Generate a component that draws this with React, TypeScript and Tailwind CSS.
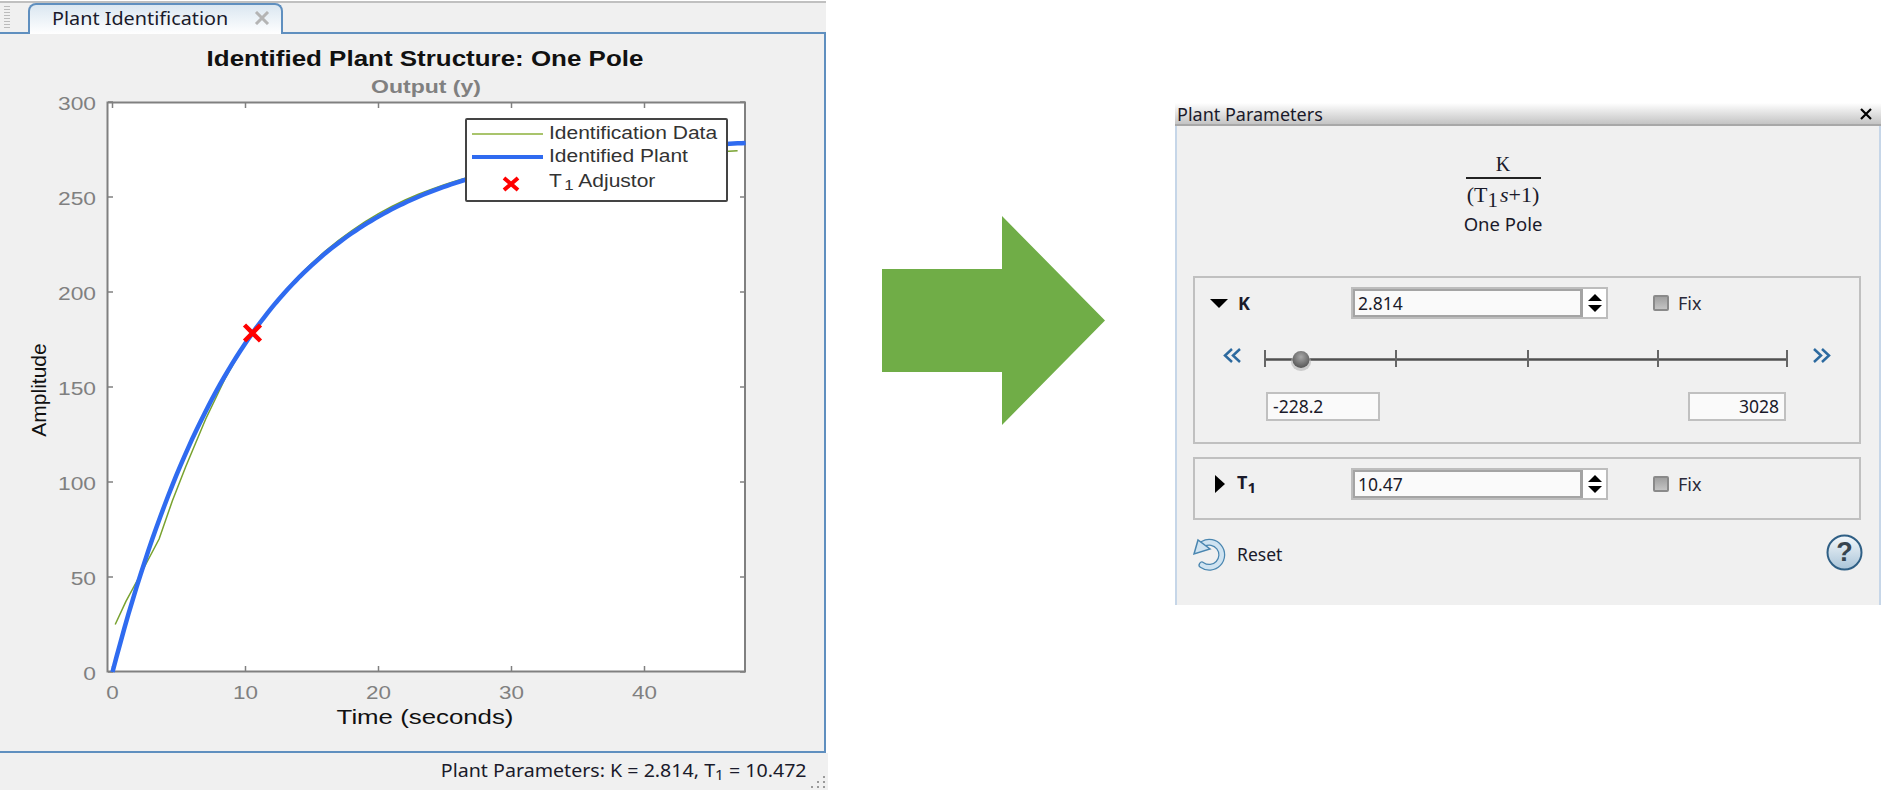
import React from 'react';

const xPx = (t: number) => 112.5 + 13.3 * t;
const yPx = (v: number) => 672 - 1.9 * v;
const plant = (t: number) => 281.4 * (1 - Math.exp(-t / 10.472));

const plantPoints = Array.from({ length: 160 }, (_, i) => {
  const t = (i / 159) * 47.6;
  return `${xPx(t).toFixed(1)},${yPx(plant(t)).toFixed(1)}`;
}).join(' ');

// the measured data leaves the fitted curve only at the start and at the far end
const dataTail = Array.from({ length: 38 }, (_, i): [number, number] => {
  const t = 10 + i;
  return [t, plant(t) + 1.5 * Math.sin(((t - 10) / 20) * Math.PI) - (t > 30 ? (t - 30) * 0.19 : 0)];
});
const dataRaw: [number, number][] = [
  [0.2, 25], [1, 37], [2, 50], [3.5, 70], [4.5, 90], [5.5, 108], [7, 133], [8.5, 155], ...dataTail,
];
const dataPoints = dataRaw.map(([t, v]) => `${xPx(t).toFixed(1)},${yPx(v).toFixed(1)}`).join(' ');

const yTicks = [0, 50, 100, 150, 200, 250, 300];
const xTicks = [0, 10, 20, 30, 40];
const chartFont = 'Liberation Sans, sans-serif';

// viewBox keeps page coordinates, the panel starts at y=34
const IdentificationPlot = () => (
  <svg className="block" width="824" height="717" viewBox="0 34 824 717" fontFamily={chartFont}>
    <text transform="translate(425 66) scale(1.18 1)" textAnchor="middle" fontSize="22" fontWeight="bold" fill="#111">
      Identified Plant Structure: One Pole
    </text>
    <text transform="translate(426 93) scale(1.28 1)" textAnchor="middle" fontSize="18" fontWeight="bold" fill="#808080">
      Output (y)
    </text>
    <rect x="107.5" y="102.5" width="637.5" height="569" fill="#fff" stroke="#808080" strokeWidth="2" />
    {yTicks.map((v) => (
      <g key={v}>
        <line x1="108" x2="113" y1={yPx(v)} y2={yPx(v)} stroke="#808080" strokeWidth="1.5" />
        <line x1="740" x2="745" y1={yPx(v)} y2={yPx(v)} stroke="#808080" strokeWidth="1.5" />
        <text transform={`translate(96 ${yPx(v) + 8}) scale(1.2 1)`} textAnchor="end" fill="#808080" fontSize="19">
          {v}
        </text>
      </g>
    ))}
    {xTicks.map((t) => (
      <g key={t}>
        <line x1={xPx(t)} x2={xPx(t)} y1="671" y2="666" stroke="#808080" strokeWidth="1.5" />
        <line x1={xPx(t)} x2={xPx(t)} y1="103" y2="108" stroke="#808080" strokeWidth="1.5" />
        <text transform={`translate(${xPx(t)} 699) scale(1.18 1)`} textAnchor="middle" fill="#808080" fontSize="19">
          {t}
        </text>
      </g>
    ))}
    <polyline points={dataPoints} fill="none" stroke="#78a22f" strokeWidth="1.500" />
    <polyline points={plantPoints} fill="none" stroke="#2f6bf0" strokeWidth="4.500" />
    <path d="M244.5 325 L260.500 341 M260.500 325 L244.500 341" stroke="#ff0000" strokeWidth="4.500" />
    <text transform="translate(425 724) scale(1.23 1)" textAnchor="middle" fill="#111" fontSize="21">
      Time (seconds)
    </text>
    <text transform="translate(46 390) rotate(-90)" textAnchor="middle" fill="#111" fontSize="21">
      Amplitude
    </text>
  </svg>
);

const Legend = () => (
  <div className="absolute left-[465px] top-[84px] w-[263px] h-[84px] bg-white border-2 border-[#444] rounded-[2px] text-[17.5px] text-[#333] pt-[2px] font-['Liberation_Sans',sans-serif]">
    <div className="flex items-center h-[23px]">
      <div className="ml-[5px] w-[71px] h-[2px] bg-[#a9c46c]" />
      <span className="ml-[6px] whitespace-nowrap inline-block origin-left scale-x-[1.2]">Identification Data</span>
    </div>
    <div className="flex items-center h-[23px]">
      <div className="ml-[5px] w-[71px] h-[4px] bg-[#2f6bf0]" />
      <span className="ml-[6px] whitespace-nowrap inline-block origin-left scale-x-[1.2]">Identified Plant</span>
    </div>
    <div className="flex items-center h-[26px]">
      <div className="w-[82px] flex justify-center pl-[5px] pt-[6px]">
        <svg width="18" height="16" viewBox="0 0 18 16">
          <path d="M2 2 L16 14 M16 2 L2 14" stroke="#ff0000" strokeWidth="4" />
        </svg>
      </div>
      <span className="whitespace-nowrap inline-block origin-left scale-x-[1.2]">
        T<sub className="text-[14px] ml-[2px]">1</sub> Adjustor
      </span>
    </div>
  </div>
);

const PlantWindow = () => (
  <div className="w-[828px] h-[790px] shrink-0 flex flex-col pt-[1px] bg-white">
    <div className="h-[33px] shrink-0 bg-[#f0f0f0] border-t-2 border-[#c0c0c0] border-b-2 border-b-[#5f8fbf] flex mr-[2px] font-['Noto_Sans',sans-serif]">
      <div className="w-[6px] h-[22px] ml-[4px] mt-[3px] bg-[repeating-linear-gradient(0deg,#bbb_0,#bbb_1px,transparent_1px,transparent_3px)]" />
      <div className="ml-[18px] w-[255px] h-[31px] flex items-center pl-[22px] pb-[3px] rounded-t-[8px] border-2 border-b-0 border-[#5f8fbf] bg-gradient-to-b from-[#dbe7f1] to-white text-[18px] text-[#1a1a2a]">
        <span className="inline-block origin-left scale-x-[1.1] whitespace-nowrap">Plant Identification</span>
        <svg className="ml-[42px] shrink-0" width="16" height="14" viewBox="0 0 16 14">
          <path d="M2 1 L14 13 M14 1 L2 13" stroke="#b4b4b4" strokeWidth="3" />
        </svg>
      </div>
    </div>
    <div className="relative h-[719px] shrink-0 mr-[2px] bg-[#f0f0f0] border-r-2 border-b-2 border-[#5f8fbf]">
      <IdentificationPlot />
      <Legend />
    </div>
    <div className="flex-1 bg-[#f0f0f0] relative flex justify-end items-center pr-[21px] pb-[3px] text-[18px] text-[#1a1a2a] font-['Noto_Sans',sans-serif]">
      <span className="inline-block origin-right scale-x-[1.09] whitespace-nowrap">
        Plant Parameters: K = 2.814, T<sub className="text-[14px]">1</sub> = 10.472
      </span>
      <svg className="absolute right-0 bottom-[1px]" width="18" height="14" viewBox="0 0 18 14">
        <path d="M1 12h2M7 12h2M13 12h2M7 7h2M13 7h2M13 2h2" stroke="#9a9a9a" strokeWidth="2" strokeDasharray="2 1" />
      </svg>
    </div>
  </div>
);

const BigArrow = () => (
  <svg className="ml-[54px] mt-[216px] shrink-0" width="223" height="209" viewBox="0 0 223 209">
    <path d="M0 53 H120 V0 L223 104.500 L120 209 V156 H0 Z" fill="#70ad47" />
  </svg>
);

const Spinner = ({ value }: { value: string }) => (
  <div className="w-[257px] h-[32px] flex border-2 border-[#bdbdbd] bg-white">
    <div className="flex-1 bg-[#fafafa] border-2 border-[#a4a4a4] border-r-[3px] pl-[3px] text-[17.5px] leading-[24px] text-[#1a1a2a]">
      {value}
    </div>
    <div className="w-[23px] flex flex-col items-center justify-center gap-[4px]">
      <div className="w-0 h-0 border-x-[7px] border-x-transparent border-b-[7px] border-b-black" />
      <div className="w-0 h-0 border-x-[7px] border-x-transparent border-t-[7px] border-t-black" />
    </div>
  </div>
);

const FixCheck = () => (
  <div className="ml-[45px] flex items-center text-[#2a2a3a] text-[18px]">
    <div className="w-[16px] h-[16px] rounded-[2px] border-2 border-[#8a8a8a] bg-gradient-to-b from-[#a0a0a0] to-[#c4c4c4]" />
    <span className="ml-[9px]">Fix</span>
  </div>
);

const SliderTrack = () => (
  <svg className="block mt-[21px]" width="664" height="40" viewBox="1195 340 664 40">
    <line x1="1265" x2="1787" y1="359.500" y2="359.500" stroke="#505050" strokeWidth="2.500" />
    {[1265, 1396, 1528, 1658, 1787].map((x) => (
      <line key={x} x1={x} x2={x} y1="350" y2="367" stroke="#666" strokeWidth="2" />
    ))}
    <defs>
      <radialGradient id="thumb" cx="50%" cy="35%" r="65%">
        <stop offset="0" stopColor="#a8a8a8" />
        <stop offset="1" stopColor="#555" />
      </radialGradient>
    </defs>
    <ellipse cx="1301" cy="362" rx="10" ry="9" fill="#bbb" opacity="0.7" />
    <circle cx="1301" cy="359.500" r="8.500" fill="url(#thumb)" />
    <path d="M1232 349 L1225 355.500 L1232 362 M1240 349 L1233 355.500 L1240 362" fill="none" stroke="#2d6a9f" strokeWidth="2.500" />
    <path d="M1814 349 L1821 355.500 L1814 362 M1822 349 L1829 355.500 L1822 362" fill="none" stroke="#2d6a9f" strokeWidth="2.500" />
  </svg>
);

const ResetIcon = () => (
  <svg width="34" height="34" viewBox="0 0 34 34">
    <g fill="none" strokeLinecap="round">
      <path d="M10 7 A12.500 12.500 0 1 1 9 28" stroke="#4a86b0" strokeWidth="7" />
      <path d="M10 7 A12.500 12.500 0 1 1 9 28" stroke="#cfe3f1" strokeWidth="4.500" />
    </g>
    <path d="M1 17 L5 3 L17 12 Z" fill="#cfe3f1" stroke="#4a86b0" strokeWidth="1.500" />
  </svg>
);

const HelpIcon = () => (
  <svg className="-mt-[2px]" width="37" height="37" viewBox="0 0 37 37">
    <defs>
      <linearGradient id="help" x1="0" y1="0" x2="0" y2="1">
        <stop offset="0" stopColor="#f4f8fb" />
        <stop offset="1" stopColor="#a9c4d8" />
      </linearGradient>
    </defs>
    <circle cx="18.500" cy="18.500" r="17" fill="url(#help)" stroke="#2f5f85" strokeWidth="2" />
    <text x="18.500" y="27" textAnchor="middle" fontSize="27" fontWeight="bold" fill="#36444f" fontFamily="Liberation Sans, sans-serif">
      ?
    </text>
  </svg>
);

const ParamsPanel = () => (
  <div className="ml-[70px] mt-[103px] w-[706px] h-[502px] shrink-0 flex flex-col bg-[#f0f0f0] font-['Noto_Sans',sans-serif] text-[#1a1a2a]">
    <div className="h-[23px] flex items-center justify-between px-[2px] bg-gradient-to-b from-white to-[#c4c4c4] border-b-2 border-[#a8a8a8] text-[18px] leading-[20px]">
      <span>Plant Parameters</span>
      <svg className="mr-[7px]" width="12" height="12" viewBox="0 0 12 12">
        <path d="M1 1 L11 11 M11 1 L1 11" stroke="#000" strokeWidth="2.200" />
      </svg>
    </div>
    <div className="flex-1 flex flex-col border-x-2 border-[#c6d6e8] pl-[16px] pr-[18px]">
      <div className="flex flex-col items-center pr-[48px] pt-[26px]">
        <div className="w-[75px] h-[27px] text-center border-b-2 border-[#222] font-['Liberation_Serif',serif] text-[20px] leading-[24px]">K</div>
        <div className="h-[32px] font-['Liberation_Serif',serif] text-[22px] leading-[32px] whitespace-nowrap">
          (T<sub className="text-[21px]">1</sub>
          <i className="ml-[2px]">s</i>+1)
        </div>
        <div className="h-[26px] text-[18.5px] leading-[26px]">One Pole</div>
      </div>

      <div className="mt-[39px] h-[168px] border-2 border-[#c0c0c0]">
        <div className="mt-[9px] h-[32px] flex items-center">
          <div className="w-[156px] flex items-center pl-[15px]">
            <div className="w-0 h-0 border-x-[9px] border-x-transparent border-t-[9px] border-t-black" />
            <span className="ml-[10px] font-bold text-[18px]">K</span>
          </div>
          <Spinner value="2.814" />
          <FixCheck />
        </div>
        <SliderTrack />
        <div className="mt-[12px] flex justify-between pl-[71px] pr-[73px] text-[17.5px] leading-[25px]">
          <div className="w-[114px] h-[29px] border-2 border-[#c0c0c0] bg-[#fafafa] pl-[5px]">-228.2</div>
          <div className="w-[98px] h-[29px] border-2 border-[#c0c0c0] bg-[#fafafa] pr-[5px] text-right">3028</div>
        </div>
      </div>

      <div className="mt-[13px] h-[63px] border-2 border-[#c0c0c0]">
        <div className="mt-[9px] h-[32px] flex items-center">
          <div className="w-[156px] flex items-center pl-[20px]">
            <div className="w-0 h-0 border-y-[9px] border-y-transparent border-l-[10px] border-l-black" />
            <span className="ml-[12px] font-bold text-[18px] leading-[20px] -mt-[4px]">
              T<sub className="text-[15px]">1</sub>
            </span>
          </div>
          <Spinner value="10.47" />
          <FixCheck />
        </div>
      </div>

      <div className="mt-[16px] flex items-center justify-between -mr-[2px]">
        <div className="flex items-center">
          <ResetIcon />
          <span className="ml-[10px] pt-[2px] text-[17.5px]">Reset</span>
        </div>
        <HelpIcon />
      </div>
    </div>
  </div>
);

export default function App() {
  return (
    <div className="w-[1881px] h-[790px] flex items-start overflow-hidden bg-white">
      <PlantWindow />
      <BigArrow />
      <ParamsPanel />
    </div>
  );
}
